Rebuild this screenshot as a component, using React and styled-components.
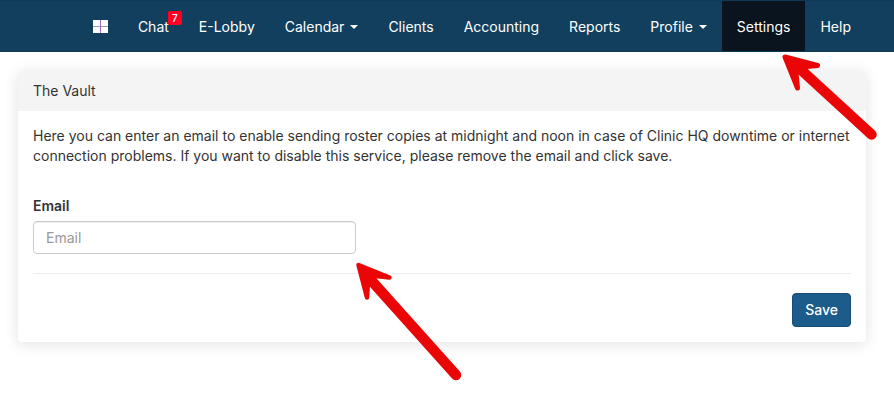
import styled, { createGlobalStyle } from "styled-components";

const links = [
  { label: "Chat", badge: 7 },
  { label: "E-Lobby" },
  { label: "Calendar", caret: true },
  { label: "Clients" },
  { label: "Accounting" },
  { label: "Reports" },
  { label: "Profile", caret: true },
  { label: "Settings", active: true },
  { label: "Help" },
];

export default function App() {
  return (
    <>
      <GlobalStyle />
      <Page>
        <Navbar>
          <NavLink href="#" aria-label="Dashboard">
            <WindowsIcon />
          </NavLink>
          {links.map(({ label, badge, caret, active }) => (
            <NavLink href="#" key={label} $active={active}>
              {label}
              {badge && <Badge>{badge}</Badge>}
              {caret && <Caret />}
            </NavLink>
          ))}
        </Navbar>

        <Main>
          <Panel>
            <PanelHeading>The Vault</PanelHeading>
            <PanelBody>
              <Description>
                Here you can enter an email to enable sending roster copies at
                midnight and noon in case of Clinic HQ downtime or internet
                connection problems. If you want to disable this service, please
                remove the email and click save.
              </Description>
              <Field>
                <Label htmlFor="email">Email</Label>
                <Input id="email" type="email" placeholder="Email" />
              </Field>
              <Divider />
              <Actions>
                <SaveButton type="button">Save</SaveButton>
              </Actions>
            </PanelBody>
          </Panel>
        </Main>

        <Arrows />
      </Page>
    </>
  );
}

function WindowsIcon() {
  return (
    <svg width="15" height="14" viewBox="0 0 15 14" aria-hidden="true">
      <path fill="#fff" d="M0 0h7v6H0zM8 0h7v6H8zM0 7h7v6H0zM8 7h7v6H8z" />
      <path fill="#8fa3b3" d="M0 6h15v1H0z" />
      <path fill="#a06cc0" d="M7 0h1v13H7z" />
    </svg>
  );
}

function Arrows() {
  return (
    <ArrowLayer width="894" height="406" viewBox="0 0 894 406" aria-hidden="true">
      <g
        fill="#ea0606"
        stroke="#ea0606"
        strokeLinecap="round"
        strokeLinejoin="round"
      >
        <path strokeWidth="10.500" d="M799 68L871.500 134.500" />
        <path strokeWidth="5" d="M785 57L817.500 65.500L802 67L796 73L797.500 88Z" />
        <path strokeWidth="10.500" d="M370 279L456 375" />
        <path strokeWidth="4.500" d="M358.500 265L389.500 277.500L376 276L368 282L367 297.500Z" />
      </g>
    </ArrowLayer>
  );
}

//STYLE--------------------------------------------------

const GlobalStyle = createGlobalStyle`
  * {
    box-sizing: border-box;
  }

  body {
    margin: 0;
    background-color: #ffffff;
    color: #333333;
    font-family: "Inter", sans-serif;
    font-size: 14px;
    line-height: 20px;
  }
`;

const Page = styled.div`
  position: relative;
  overflow-x: clip;
`;

const Navbar = styled.nav`
  display: flex;
  justify-content: flex-end;
  min-height: 52px;
  padding: 0 28px;
  background-color: #123f5d;
  border: 1px solid #103a56;
  border-width: 1px 0;
`;

const NavLink = styled.a`
  position: relative;
  display: flex;
  align-items: center;
  padding: 16px 15px 14px;
  color: #ffffff;
  white-space: nowrap;
  text-decoration: none;
  background-color: ${({ $active }) => ($active ? "#09141e" : "transparent")};
`;

const Badge = styled.span`
  position: absolute;
  top: 10px;
  right: 2px;
  width: 14px;
  border-radius: 2px;
  background-color: #ff0022;
  font-size: 10px;
  font-weight: 500;
  line-height: 14px;
  text-align: center;
`;

const Caret = styled.span`
  margin-left: 6px;
  border-top: 4px solid #ffffff;
  border-right: 4px solid transparent;
  border-left: 4px solid transparent;
`;

const Main = styled.main`
  padding: 19px 28px 60px 18px;
`;

const Panel = styled.section`
  border-radius: 4px;
  background-color: #ffffff;
  box-shadow: 0 2px 15px rgba(0, 0, 0, 0.12);
`;

const PanelHeading = styled.header`
  padding: 10px 15px;
  border-radius: 4px 4px 0 0;
  background-color: #f4f4f4;
`;

const PanelBody = styled.div`
  padding: 15px;
`;

const Description = styled.p`
  margin: 0 0 30px;
`;

const Field = styled.div`
  display: flex;
  flex-direction: column;
  gap: 5px;
  max-width: 323px;
`;

const Label = styled.label`
  font-weight: 600;
`;

const Input = styled.input`
  width: 100%;
  height: 33px;
  padding: 6px 12px;
  border: 1px solid #cccccc;
  border-radius: 4px;
  background-color: #ffffff;
  color: #555555;
  font: inherit;
  box-shadow: inset 0 1px 1px rgba(0, 0, 0, 0.075);

  &::placeholder {
    color: #999999;
  }
`;

const Divider = styled.hr`
  margin: 19px 0;
  border: 0;
  border-top: 1px solid #eeeeee;
`;

const Actions = styled.div`
  display: flex;
  justify-content: flex-end;
`;

const SaveButton = styled.button`
  padding: 6px 12px;
  border: 1px solid #164d74;
  border-radius: 4px;
  background-color: #1b5c8a;
  color: #ffffff;
  font: inherit;
  font-weight: 500;
  cursor: pointer;
`;

const ArrowLayer = styled.svg`
  position: absolute;
  top: 0;
  left: 0;
  pointer-events: none;
`;
